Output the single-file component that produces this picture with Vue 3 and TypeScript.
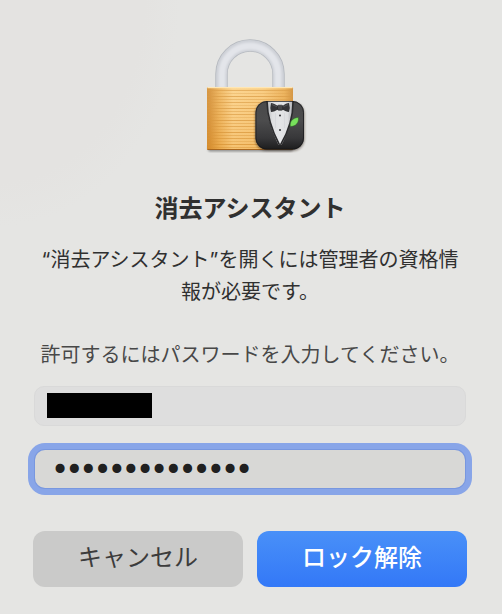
<script setup lang="ts">
import { ref } from 'vue'

const account = ref('')
const password = ref('assistant-pass')
const grain = Array.from({ length: 20 }, (_, i) => ({
  y: 52 + i * 3,
  opacity: [0.7, 0.35, 0.8, 0.5][i % 4],
}))

function cancel(): void {
  password.value = ''
}
</script>

<template>
  <main class="dialog">
    <svg class="lock" width="108" height="118" viewBox="0 0 108 118" aria-hidden="true">
      <defs>
        <linearGradient id="brass" x1="0" x2="1" y1="0" y2="0">
          <stop offset="0" stop-color="#cc842c" />
          <stop offset="0.04" stop-color="#d18b35" />
          <stop offset="0.14" stop-color="#eaae58" />
          <stop offset="0.3" stop-color="#fbd390" />
          <stop offset="0.65" stop-color="#f8ca80" />
          <stop offset="0.9" stop-color="#e8aa52" />
          <stop offset="1" stop-color="#c98531" />
        </linearGradient>
        <linearGradient id="brassShade" x1="0" x2="0" y1="0" y2="1">
          <stop offset="0" stop-color="#ffdf9b" stop-opacity="0.2" />
          <stop offset="1" stop-color="#e89c2c" stop-opacity="0.3" />
        </linearGradient>
        <linearGradient id="jacket" x1="0" x2="0" y1="0" y2="1">
          <stop offset="0" stop-color="#4a4a4b" />
          <stop offset="0.4" stop-color="#4c4c4d" />
          <stop offset="0.75" stop-color="#38383a" />
          <stop offset="1" stop-color="#1b1b1c" />
        </linearGradient>
        <linearGradient id="shirt" x1="0" x2="1" y1="0" y2="0">
          <stop offset="0" stop-color="#b4b6b9" />
          <stop offset="0.2" stop-color="#dedfe1" />
          <stop offset="0.5" stop-color="#e4e5e7" />
          <stop offset="0.8" stop-color="#dedfe1" />
          <stop offset="1" stop-color="#b0b2b6" />
        </linearGradient>
        <clipPath id="badge"><rect x="59.5" y="63" width="48.5" height="48.5" rx="11.5" /></clipPath>
        <filter id="soft" x="-20%" y="-20%" width="140%" height="140%"><feGaussianBlur stdDeviation="1.2" /></filter>
        <filter id="glow" x="-20%" y="-20%" width="140%" height="140%"><feGaussianBlur stdDeviation="0.8" /></filter>
      </defs>
      <rect x="12" y="107" width="85" height="6.5" rx="2" fill="#555" opacity="0.6" filter="url(#soft)" />
      <g fill="none">
        <path d="M25.500 50V36A28.500 28.500 0 0 1 82.500 36V50" stroke="#b4b8be" stroke-width="12.400" />
        <path d="M25.500 50V36A28.500 28.500 0 0 1 82.500 36V50" stroke="#cdd0d6" stroke-width="10.800" />
        <path d="M26 50V36A28 28 0 0 1 82 36V50" stroke="#e3e5ea" stroke-width="7" filter="url(#glow)" />
      </g>
      <rect x="11" y="49" width="86" height="63" rx="1.500" fill="url(#brass)" />
      <g stroke="#d18d34" stroke-width="0.900">
        <line v-for="line in grain" :key="line.y" x1="11.500" x2="96.500" :y1="line.y + 0.5" :y2="line.y + 0.5" :opacity="line.opacity" />
      </g>
      <rect x="11" y="49" width="86" height="63" rx="1.500" fill="url(#brassShade)" />
      <path d="M11.500 49.600H96.500" stroke="#ffe7b4" stroke-width="1.200" />
      <path d="M11.500 111.500H96.500" stroke="#a8661d" stroke-width="1" />
      <rect x="59" y="64" width="49.500" height="49" rx="12" fill="#33251a" opacity="0.5" filter="url(#soft)" />
      <g clip-path="url(#badge)">
        <rect x="59" y="63" width="50" height="49" fill="url(#jacket)" />
        <path d="M71 62H96.500C97 78 93.500 91 85.500 107H82.500C75 91 71 78 71 62Z" fill="url(#shirt)" />
        <path d="M71 62C71 78 75 91 83.500 107" fill="none" stroke="#2b2b2d" stroke-width="1.600" />
        <path d="M97 62C97.500 78 94 91 84.500 107" fill="none" stroke="#2b2b2d" stroke-width="1.600" />
        <path d="M79.500 75V90M88.500 75V90" stroke="#d0d2d6" stroke-width="0.600" />
        <path d="M82 68C79 66 76.500 65 75 65Q73.700 69.500 75 74C77.500 74 80 72.500 82 71.500H86.500C89 73 91 74 93 74Q94.500 69.500 93 65C91 65 89 66 86.500 68Z" fill="#343437" />
        <path d="M76 66.500L81.500 69M92 66.500L87 69" stroke="#58585b" stroke-width="0.900" />
        <rect x="81.500" y="67.200" width="5.300" height="5" rx="1.200" fill="#454548" stroke="#202022" stroke-width="0.600" />
        <circle cx="84" cy="77.500" r="1" fill="#303034" />
        <circle cx="84" cy="92" r="1" fill="#303034" />
        <path d="M94.300 88.500C93.500 83.500 96.500 80 102.300 79.300C103.300 84.500 100 88.500 94.300 88.500Z" fill="#78e05c" stroke="#275d20" stroke-width="0.500" />
      </g>
      <rect x="60" y="63.500" width="47.500" height="47.500" rx="11" fill="none" stroke="#17171a" stroke-width="1" opacity="0.700" />
    </svg>

    <h1 class="title">消去アシスタント</h1>
    <p class="message">“消去アシスタント”を開くには管理者の資格情報が必要です。</p>

    <form class="form" @submit.prevent>
      <label class="prompt" for="password">許可するにはパスワードを入力してください。</label>
      <div class="account">
        <input v-model="account" class="account-input" type="text" aria-label="ユーザ名" autocomplete="off" />
        <span class="mask"></span>
      </div>
      <input id="password" v-model="password" class="password" type="password" autocomplete="off" />
      <div class="actions">
        <button class="button cancel" type="button" @click="cancel">キャンセル</button>
        <button class="button unlock" type="submit">ロック解除</button>
      </div>
    </form>
  </main>
</template>

<style>
body {
  margin: 0;
  background: #e5e5e3;
}
</style>

<style scoped>
.dialog {
  box-sizing: border-box;
  min-height: 100vh;
  padding: 38px 35px 27px 33px;
  display: flex;
  flex-direction: column;
  align-items: center;
  background: radial-gradient(ellipse 180px 226px at 0 0, #e4e3e1 80%, #e5e5e3 100%);
  color: #303030;
  font-family: Inter, "Noto Sans CJK JP", sans-serif;
}

.lock {
  display: block;
  overflow: visible;
}

.title {
  margin: 37px 0 0;
  font-size: 24px;
  line-height: 32px;
  font-weight: 700;
}

.message {
  margin: 19px 0 0;
  padding: 0 4px;
  font-size: 20px;
  line-height: 32px;
  text-align: center;
}

.form {
  width: 100%;
  margin-top: 31px;
  display: flex;
  flex-direction: column;
}

.prompt {
  font-size: 20px;
  line-height: 32px;
  text-align: center;
  color: #484848;
}

.account {
  position: relative;
  display: flex;
  margin: 15px 1px 0;
}

.account-input {
  box-sizing: border-box;
  width: 100%;
  height: 40px;
  padding: 0 12px;
  border: 1px solid #d9d9d9;
  border-radius: 10px;
  background: #dedede;
  font: inherit;
  font-size: 20px;
  outline: none;
}

.mask {
  position: absolute;
  left: 13px;
  top: 7px;
  width: 105px;
  height: 25px;
  background: #000;
}

.password {
  box-sizing: border-box;
  height: 38px;
  margin: 24px 2px 0;
  padding: 2px 18px 0;
  border: 0;
  border-radius: 10px;
  background: #d8d8d6;
  box-shadow: 0 0 0 1px #7897df, 0 0 0 7px #88a5e8;
  color: #202020;
  font-family: "DejaVu Sans", sans-serif;
  font-size: 24px;
  -webkit-text-stroke: 2px #202020;
  outline: none;
}

.actions {
  display: grid;
  grid-template-columns: 1fr 1fr;
  gap: 14px;
  margin-top: 43px;
}

.button {
  height: 56px;
  padding: 0 0 2px;
  border: 0;
  border-radius: 12px;
  font: inherit;
  font-size: 24px;
  line-height: 32px;
}

.cancel {
  background: #cacac9;
  color: #3c3c3c;
}

.unlock {
  background: linear-gradient(#4990f8, #3378f7);
  color: #fff;
  font-weight: 500;
}
</style>
